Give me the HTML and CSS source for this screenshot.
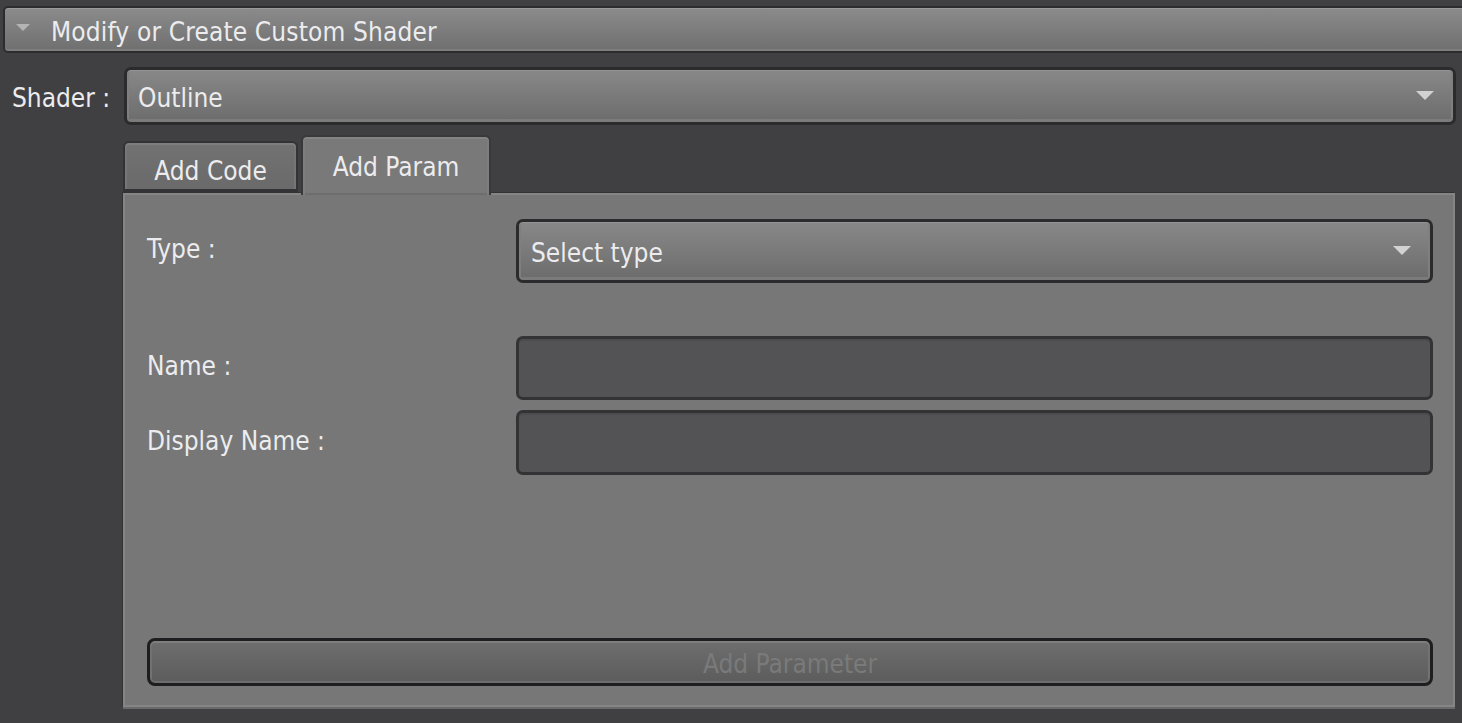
FILE: index.html
```html
<!DOCTYPE html>
<html>
<head>
<meta charset="utf-8">
<link rel="stylesheet" href="styles.css">
</head>
<body>
<div class="page">
  <div class="section-header">
    <svg class="caret" width="14" height="8" viewBox="0 0 14 8"><polygon points="0,0 14,0 7,7" fill="#b4b4b4"/></svg>
    <span class="section-title">Modify or Create Custom Shader</span>
  </div>

  <div class="shader-row">
    <label class="shader-label">Shader :</label>
    <div class="combo combo-main">
      <span class="combo-text">Outline</span>
      <svg class="combo-arrow" width="18" height="10" viewBox="0 0 18 10"><polygon points="0,0 18,0 9,9" fill="#d2d2d2"/></svg>
    </div>
  </div>

  <div class="tabs-area">
    <div class="tabbar">
      <div class="tab">Add Code</div>
      <div class="tab active">Add Param</div>
    </div>
    <div class="panel">
      <div class="form-row">
        <label class="form-label">Type :</label>
        <div class="combo combo-type">
          <span class="combo-text">Select type</span>
          <svg class="combo-arrow" width="18" height="10" viewBox="0 0 18 10"><polygon points="0,0 18,0 9,9" fill="#d2d2d2"/></svg>
        </div>
      </div>
      <div class="form-row row-name">
        <label class="form-label">Name :</label>
        <div class="field"></div>
      </div>
      <div class="form-row row-display">
        <label class="form-label">Display Name :</label>
        <div class="field"></div>
      </div>
      <button class="btn" disabled>Add Parameter</button>
    </div>
  </div>
</div>
</body>
</html>
```

FILE: styles.css
```css
* { box-sizing: border-box; }

html, body {
  margin: 0;
  padding: 0;
  background: #404042;
  overflow: hidden;
}

body {
  font-family: "DejaVu Sans Condensed", "Liberation Sans", sans-serif;
  font-size: 26px;
  color: #e6e6e8;
}

.page {
  padding-top: 6px;
  width: 1462px;
  height: 723px;
}

.section-header {
  margin-left: 3px;
  margin-right: -12px;
  height: 47px;
  border: 2px solid #2c2c2e;
  border-radius: 5px;
  background: linear-gradient(#8b8b8b, #6f6f6f);
  box-shadow: inset 0 1px 0 #9a9a9a, inset 0 -2px 0 #7d7d7d;
  display: flex;
  align-items: center;
  padding-left: 11px;
}

.caret { margin-top: -4px; }

.section-title {
  margin-left: 21px;
  margin-top: 4px;
  letter-spacing: 0.15px;
  color: #ececee;
}

.shader-row {
  margin-top: 14px;
  display: flex;
  align-items: center;
}

.shader-label {
  width: 124px;
  padding-left: 12px;
  margin-top: 4px;
  flex: none;
  color: #ececee;
}

.combo {
  display: flex;
  align-items: center;
  justify-content: space-between;
  border: 3px solid #2b2b2d;
  border-radius: 7px;
  background: linear-gradient(#888888, #6c6c6c);
  box-shadow: inset 0 1px 0 #939393, inset 0 -3px 0 #7b7b7b, inset 2px 0 0 #7f7f7f, inset -2px 0 0 #7f7f7f;
  color: #ececee;
}

.combo-main {
  flex: 1;
  margin-right: 6px;
  height: 58px;
  padding-left: 11px;
  padding-right: 19px;
}

.combo-type {
  height: 64px;
  padding-left: 12px;
  padding-right: 19px;
}

.combo-text { margin-top: 4px; }

.tabs-area {
  margin-top: 10px;
  margin-left: 123px;
  margin-right: 7px;
}

.tabbar {
  height: 58px;
  display: flex;
  align-items: flex-end;
  gap: 3px;
  position: relative;
  z-index: 1;
}

.tab {
  height: 52px;
  width: 175px;
  border: 2px solid #333335;
  border-bottom: 4px solid #333335;
  border-radius: 6px 6px 0 0;
  background: linear-gradient(#727272, #6a6a6a);
  box-shadow: inset 0 2px 0 #7e7e7e, inset 2px 0 0 #767676, inset -2px 0 0 #767676;
  display: flex;
  align-items: center;
  justify-content: center;
  padding-top: 10px;
  color: #ececee;
}

.tab.active {
  height: 60px;
  width: 190px;
  margin-bottom: -2px;
  border-bottom: none;
  border-color: #39393b;
  background: #797979;
  box-shadow: inset 0 2px 0 #848484, inset 2px 0 0 #7d7d7d, inset -2px 0 0 #7d7d7d, inset 0 -2px 0 #6e6e6e;
  padding-top: 2px;
  padding-bottom: 0;
}

.panel {
  height: 514px;
  border: 2px solid #858585;
  box-shadow: -1px -1px 0 #333335, 0 2px 0 #6a6a6a;
  background: #777777;
  padding: 24px 20px 19px 22px;
  display: flex;
  flex-direction: column;
}

.form-row {
  display: grid;
  grid-template-columns: 369px 1fr;
  align-items: center;
}

.form-label {
  color: #ececee;
  padding-bottom: 4px;
}

.row-name { margin-top: 53px; }
.row-display { margin-top: 10px; }

.field {
  height: 64px;
  border: 3px solid #333335;
  border-radius: 7px;
  background: #535355;
  box-shadow: inset 0 2px 0 #4c4c4e;
}

.row-display .field { height: 65px; }

.btn {
  margin-top: auto;
  height: 48px;
  width: 100%;
  border: 3px solid #1e1e20;
  border-radius: 8px;
  background: linear-gradient(#6e6e6e, #5c5c5c);
  box-shadow: inset 0 2px 0 #7e7e7e, inset 0 -2px 0 #6c6c6c, inset 2px 0 0 #727272, inset -2px 0 0 #727272;
  font-family: inherit;
  font-size: 26px;
  color: #7a7a7a;
  padding: 4px 0 0 0;
}
```
